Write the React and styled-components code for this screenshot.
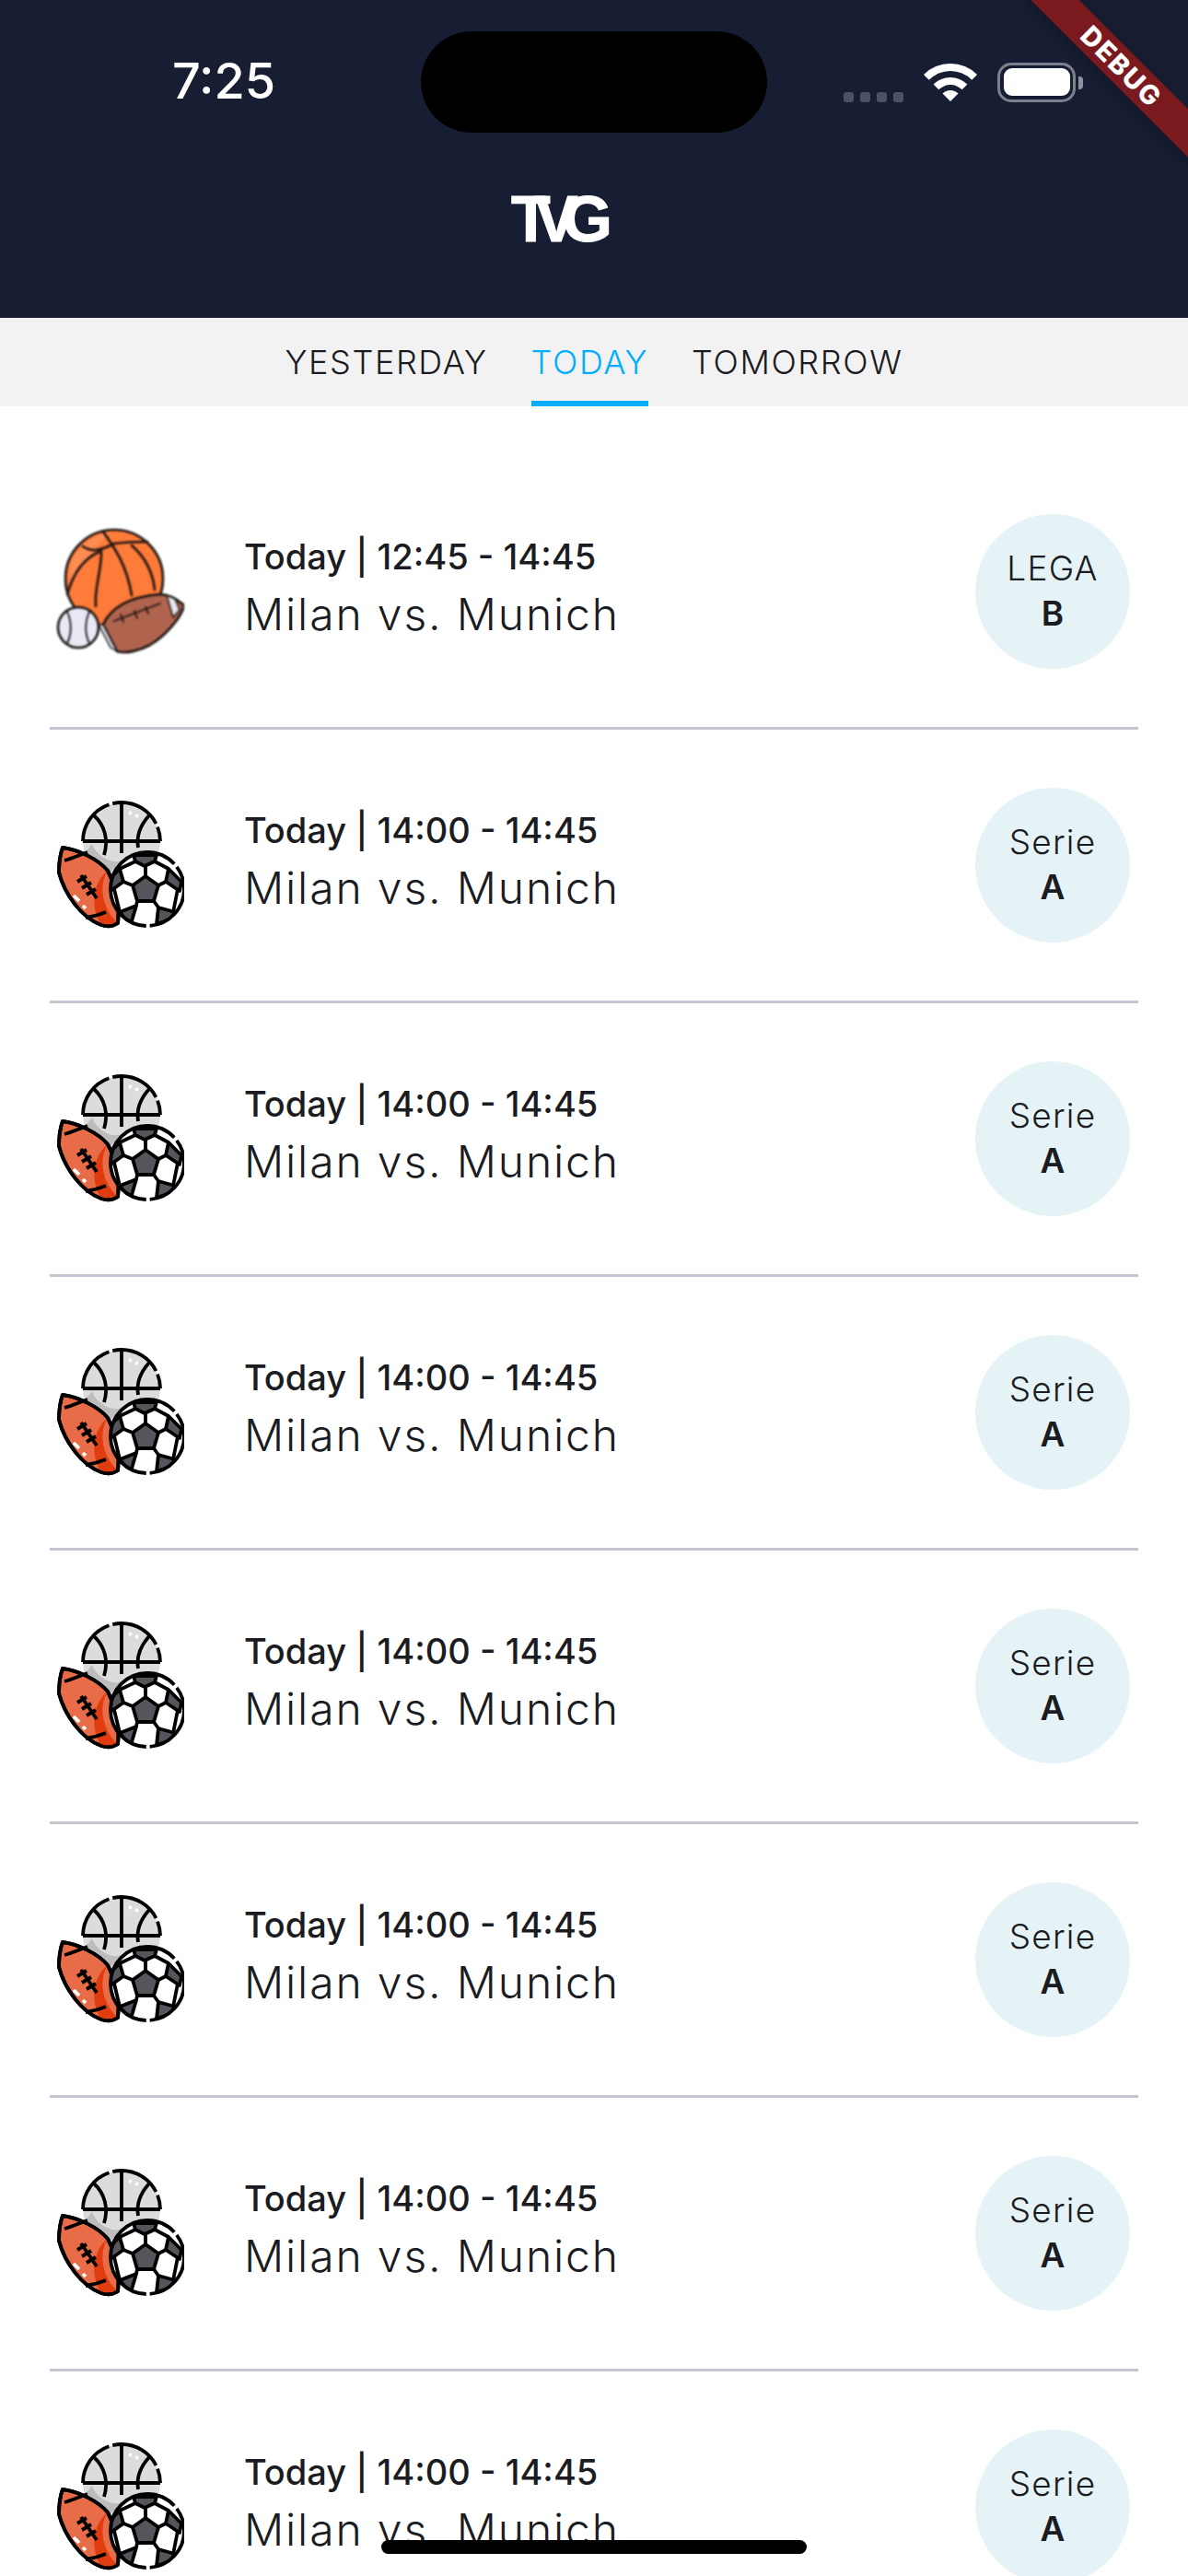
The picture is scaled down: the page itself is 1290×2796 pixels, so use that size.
import React from 'react'
import styled, { createGlobalStyle } from 'styled-components'

const Global = createGlobalStyle`
  html, body { margin: 0; padding: 0; background: #fff; }
  body { font-family: Inter, "Noto Sans", sans-serif; color: #1b1c22; }
`

const Page = styled.div`
  position: relative;
  width: 1290px;
  height: 2796px;
  overflow: hidden;
  background: #fff;
`
const Header = styled.header`
  height: 345px;
  background: #171e33;
  display: flex;
  flex-direction: column;
  align-items: center;
`
const StatusBar = styled.div`
  align-self: stretch;
  display: flex;
  align-items: center;
  padding: 34px 0 0 187px;
  height: 110px;
`
const Time = styled.div`
  width: 111px;
  margin-bottom: 3px;
  font-size: 54px;
  font-weight: 500;
  color: #fff;
  white-space: nowrap;
`
const Island = styled.div`
  width: 376px;
  height: 110px;
  margin-left: 159px;
  border-radius: 55px;
  background: #000;
`
const Indicators = styled.div`
  display: flex;
  align-items: flex-end;
  margin-left: 83px;
  height: 43px;
`
const Dots = styled.div`
  display: flex;
  gap: 7px;
`
const Dot = styled.span`
  width: 11px;
  height: 11px;
  border-radius: 3px;
  background: #4d5263;
`
const Wifi = styled.svg`
  width: 58px;
  height: 43px;
  margin-left: 22px;
  fill: #fff;
`
const Battery = styled.div`
  box-sizing: border-box;
  width: 85px;
  height: 43px;
  margin-left: 22px;
  padding: 3.5px;
  border: 3.5px solid #7d818d;
  border-radius: 15px;
  display: flex;
`
const BatteryFill = styled.div`
  flex: 1;
  border-radius: 9px;
  background: #fff;
`
const BatteryNub = styled.div`
  width: 5px;
  height: 14px;
  margin: 0 0 14px 3px;
  border-radius: 0 4px 4px 0;
  background: #8f929c;
`
const Logo = styled.div`
  margin: 69px 70px 0 0;
  font-family: "Liberation Sans", Arial, sans-serif;
  font-size: 70px;
  line-height: 50px;
  font-weight: 700;
  letter-spacing: -17px;
  padding-right: 17px;
  color: #fff;
  -webkit-text-stroke: 1px #fff;
`
const TabBar = styled.nav`
  height: 96px;
  background: #f2f2f2;
  display: flex;
  justify-content: center;
  gap: 47px;
`
const Tab = styled.div`
  box-sizing: border-box;
  display: flex;
  align-items: center;
  justify-content: center;
  height: 96px;
  font-size: 36px;
  font-weight: 300;
  letter-spacing: 1.6px;
  color: ${p => (p.$active ? '#00aeff' : '#1b1c22')};
  border-bottom: 6px solid ${p => (p.$active ? '#00aeff' : 'transparent')};
  border-top: 6px solid transparent;
`
const List = styled.main`
  padding: 54px 54px 0;
`
const Row = styled.article`
  display: flex;
  align-items: center;
  height: 294px;
  padding: 0 9px 0 6px;
  border-bottom: 3px solid #c5c5d2;
`
const SportIcon = styled.svg`
  flex: none;
  width: 140px;
  height: 140px;
  ${p => p.$soft && 'filter: blur(0.8px);'}
`
const Info = styled.div`
  flex: 1;
  margin-left: 65px;
  padding-bottom: 9px;
  display: flex;
  flex-direction: column;
  gap: 9px;
`
const When = styled.div`
  font-size: 38px;
  line-height: 50px;
  font-weight: 500;
`
const Teams = styled.div`
  font-size: 48px;
  line-height: 58px;
  font-weight: 300;
  letter-spacing: 1.85px;
`
const League = styled.div`
  flex: none;
  width: 168px;
  height: 168px;
  padding-bottom: 2px;
  box-sizing: border-box;
  border-radius: 50%;
  background: #e6f3f6;
  display: flex;
  flex-direction: column;
  align-items: center;
  justify-content: center;
  gap: 3px;
`
const LeagueName = styled.div`
  font-size: 37px;
  line-height: 46px;
  font-weight: 300;
  letter-spacing: 1.2px;
`
const LeagueLevel = styled.div`
  font-size: 37px;
  line-height: 46px;
  font-weight: 600;
`
const Ribbon = styled.div`
  position: absolute;
  top: 0;
  right: 0;
  width: 180px;
  height: 180px;
  overflow: hidden;
`
const RibbonBand = styled.div`
  position: absolute;
  left: -64px;
  top: 52px;
  box-sizing: border-box;
  width: 340px;
  height: 37px;
  padding-left: 5px;
  transform: rotate(45deg);
  background: #7a1a1f;
  box-shadow: 0 3px 12px rgba(0, 0, 0, 0.25);
  display: flex;
  align-items: center;
  justify-content: center;
  color: #fff;
  font-size: 29px;
  font-weight: 800;
  letter-spacing: 2px;
`
const HomeBar = styled.div`
  position: absolute;
  left: 414px;
  top: 2757px;
  width: 462px;
  height: 15px;
  border-radius: 8px;
  background: #000;
`

const MixedBalls = () => (
  <SportIcon $soft viewBox="20 22 140 140">
    <g stroke="#1a1412" strokeWidth="2.6" strokeLinecap="round" strokeLinejoin="round">
      <circle cx="84" cy="78" r="53" fill="#ff7b3a" />
      <path d="M36 62C44 44 60 30 80 27C64 45 48 60 34 92Z" fill="#ff8c52" stroke="none" />
      <g fill="none">
        <path d="M72 27C82 42 97 60 103 96" />
        <path d="M103 42C118 55 126 72 128 90" />
        <path d="M50 43C60 50 70 47 84 40C92 39 105 38 120 38" />
        <path d="M33 95C40 70 52 55 70 48" />
        <path d="M70 50C70 70 62 90 64 108" />
      </g>
      <circle cx="45" cy="131" r="22" fill="#e9e9f6" />
      <path d="M33 114C38 125 38 138 33 148M57 114C52 125 52 138 57 148" fill="none" strokeWidth="1.8" />
      <path d="M72 128C80 110 100 98 133 95C143 95 152 100 160 107C157 120 140 140 123 150C112 156 97 160 87 157Z" fill="#b0644d" />
      <path d="M72 128L87 157L80 153L67 128Z" fill="#d9d9e6" strokeWidth="1.4" />
      <path d="M141 96L150 100L155 112L148 120Z" fill="#e6e6f0" strokeWidth="1.4" />
      <path d="M84 124L134 105M91 117L94 125M106 113L109 121M118 109L121 116" fill="none" strokeWidth="1.8" />
    </g>
  </SportIcon>
)

const pentagons = [
  '105,78 130,78 128,85 117,90 107,85',
  '90,93 94,107 80,117 80,103',
  '143,93 140,107 155,117 157,107',
  '90,140 108,133 103,150 100,153',
  '132,135 150,140 145,148 130,153',
]

const TeamBalls = () => (
  <SportIcon viewBox="20 19 140 140">
    <defs>
      <clipPath id="soccer-clip">
        <circle cx="120" cy="115" r="39" />
      </clipPath>
    </defs>
    <g stroke="#000" strokeWidth="3.8" strokeLinecap="butt" strokeLinejoin="round" fill="none">
      <circle cx="92" cy="63" r="42" fill="#dcdcdc" stroke="none" />
      <path d="M52 76C60 88 68 93 78 99L92 84C84 88 66 82 60 66Z" fill="#bdbdbd" stroke="none" />
      <path d="M50 63A42 42 0 0 1 134 63" strokeDasharray="52 4 56 4 20" />
      <path d="M50 63H134M92 21V76M62 35C74 46 78 62 73 78M122 35C112 46 108 58 110 70" />
      <path d="M100 32L103 33M107 35L110 36" stroke="#fff" />
      <path d="M28 70C44 72 66 82 77 95C86 112 90 132 88 152C82 156 76 156 70 154C48 146 30 120 24 97C24 86 25 78 28 70Z" fill="#e86c48" />
      <path d="M77 95C66 112 72 138 88 152C82 156 76 156 70 154C58 136 60 108 77 95Z" fill="#e03c10" stroke="none" />
      <path d="M28 70C44 72 66 82 77 95C86 112 90 132 88 152C82 156 76 156 70 154C48 146 30 120 24 97C24 86 25 78 28 70Z" />
      <path d="M30 84C38 82 46 78 55 75M53 146C60 145 68 143 75 140" />
      <path d="M48 100L65 125M44 107L54 101M49 114L59 108M54 121L64 115" />
      <path d="M40 122L46 128M50 133L53 136" stroke="#fff" />
      <circle cx="120" cy="115" r="40" fill="#fff" stroke="none" />
      <g clipPath="url(#soccer-clip)">
        {pentagons.map(points => (
          <polygon key={points} points={points} fill="#55555c" />
        ))}
      </g>
      <polygon points="118,101 132,111 127,128 109,128 104,111" fill="#55555c" />
      <path d="M118 101V90M132 111L140 107M127 128L132 135M109 128L108 133M104 111L94 107" />
      <path d="M107 85L90 93M128 85L143 93M84 115L90 140M153 115L148 140" />
      <circle cx="120" cy="115" r="40" strokeDasharray="60 4 157 4 26" />
    </g>
  </SportIcon>
)

const matches = [
  { id: 1, time: '12:45 - 14:45', name: 'LEGA', level: 'B', mixed: true },
  ...[2, 3, 4, 5, 6, 7, 8].map(id => ({ id, time: '14:00 - 14:45', name: 'Serie', level: 'A' })),
]

export default function App() {
  return (
    <Page>
      <Global />
      <Header>
        <StatusBar>
          <Time>7:25</Time>
          <Island />
          <Indicators>
            <Dots>
              <Dot /><Dot /><Dot /><Dot />
            </Dots>
            <Wifi viewBox="-0.5 0 58 43">
              <path d="M-0.5 13A41 41 0 0 1 57.5 13L51.8 18.7A33 33 0 0 0 5.2 18.7Z" />
              <path d="M10.1 23.6A26 26 0 0 1 46.9 23.6L41.2 29.3A18 18 0 0 0 15.8 29.3Z" />
              <path d="M20 33.5A12 12 0 0 1 37 33.5L28.5 42Z" />
            </Wifi>
            <Battery>
              <BatteryFill />
            </Battery>
            <BatteryNub />
          </Indicators>
        </StatusBar>
        <Logo>TVG</Logo>
      </Header>
      <TabBar>
        <Tab>YESTERDAY</Tab>
        <Tab $active>TODAY</Tab>
        <Tab>TOMORROW</Tab>
      </TabBar>
      <List>
        {matches.map(m => (
          <Row key={m.id}>
            {m.mixed ? <MixedBalls /> : <TeamBalls />}
            <Info>
              <When>Today | {m.time}</When>
              <Teams>Milan vs. Munich</Teams>
            </Info>
            <League>
              <LeagueName>{m.name}</LeagueName>
              <LeagueLevel>{m.level}</LeagueLevel>
            </League>
          </Row>
        ))}
      </List>
      <Ribbon>
        <RibbonBand>DEBUG</RibbonBand>
      </Ribbon>
      <HomeBar />
    </Page>
  )
}
